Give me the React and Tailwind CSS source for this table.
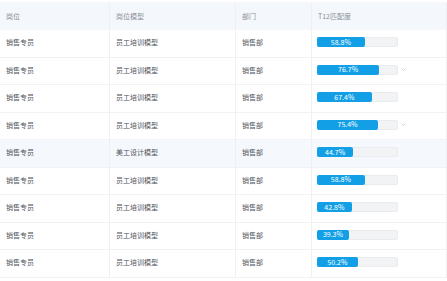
const rows = [
  { post: '销售专员', model: '员工培训模型', dept: '销售部', pct: 58.8 },
  { post: '销售专员', model: '员工培训模型', dept: '销售部', pct: 76.7, mark: true },
  { post: '销售专员', model: '员工培训模型', dept: '销售部', pct: 67.4 },
  { post: '销售专员', model: '员工培训模型', dept: '销售部', pct: 75.4, mark: true },
  { post: '销售专员', model: '美工设计模型', dept: '销售部', pct: 44.7, active: true },
  { post: '销售专员', model: '员工培训模型', dept: '销售部', pct: 58.8 },
  { post: '销售专员', model: '员工培训模型', dept: '销售部', pct: 42.8 },
  { post: '销售专员', model: '员工培训模型', dept: '销售部', pct: 39.3 },
  { post: '销售专员', model: '员工培训模型', dept: '销售部', pct: 50.2 },
];

const cols = 'grid grid-cols-[110px_126px_76px_1fr]';
const cell = 'flex items-center pl-[6px] border-r border-[#eef0f4]';

export default function App() {
  return (
    <div
      className="w-[447px] h-[281px] overflow-hidden bg-white pt-[2px]"
      style={{ fontFamily: '"Noto Sans CJK SC", "Liberation Sans", sans-serif' }}
    >
      <div className="w-[447px] border-r border-[#eef0f4]">
        {/* header */}
        <div className={`${cols} h-[28px] bg-[#f4f7fb] text-[7px] text-[#8a8f99]`}>
          <div className={cell}>岗位</div>
          <div className={cell}>岗位模型</div>
          <div className={cell}>部门</div>
          <div className="flex items-center pl-[6px]">T12匹配度</div>
        </div>

        {rows.map((r, i) => (
          <div
            key={i}
            className={`${cols} h-[27.5px] border-b border-[#f0f2f5] text-[7px] text-[#4f545c] ${
              r.active ? 'bg-[#f5f9fe]' : 'bg-white'
            }`}
          >
            <div className={`${cell} pb-[2px]`}>{r.post}</div>
            <div className={`${cell} pb-[2px]`}>{r.model}</div>
            <div className={`${cell} pb-[2px]`}>{r.dept}</div>
            <div className="flex items-center pl-[5px] pb-[2px]">
              <div className="relative w-[81px] h-[10px] rounded-[2px] bg-[#f2f3f5] border border-[#e9ebee]">
                <div
                  className="absolute left-[-1px] top-[-1px] h-[10px] rounded-[2px] bg-[#129fe6] flex items-center justify-center text-white text-[7px] leading-none"
                  style={{ width: `${(r.pct / 100) * 81}px` }}
                >
                  {r.pct}%
                </div>
              </div>
              {r.mark && (
                <svg className="ml-[3px] -mt-[1px]" width="5" height="3" viewBox="0 0 5 3">
                  <path d="M0.5 0.5 L2.5 2.5 L4.5 0.5" fill="none" stroke="#c3c7cd" strokeWidth="0.8" />
                </svg>
              )}
            </div>
          </div>
        ))}
      </div>
    </div>
  );
}
